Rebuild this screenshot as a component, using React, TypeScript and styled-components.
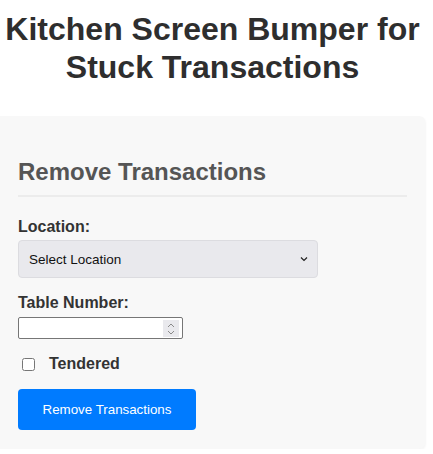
import React, { useState } from 'react'
import styled, { createGlobalStyle } from 'styled-components'

const GlobalStyle = createGlobalStyle`
  html, body {
    margin: 0;
    padding: 0;
    background: #fff;
  }
  body {
    font-family: 'Liberation Sans', Arial, sans-serif;
    color: #333;
  }
`

const Page = styled.div`
  width: 425px;
`

const Title = styled.h1`
  margin: 10px 0 0;
  font-size: 32px;
  line-height: 38px;
  font-weight: bold;
  text-align: center;
  color: #2e2e2e;
`

const Panel = styled.div`
  margin-top: 30px;
  background: #f8f8f8;
  border-radius: 0 6px 6px 0;
  padding: 42px 18px 19px;
  box-shadow: 1px 1px 2px rgba(0, 0, 0, 0.04);
`

const PanelTitle = styled.h2`
  margin: 0 0 20px;
  padding-bottom: 9px;
  font-size: 24px;
  line-height: 28px;
  color: #555;
  border-bottom: 2px solid #ececec;
`

const Field = styled.div<{ $gap: number }>`
  display: flex;
  flex-direction: column;
  align-items: flex-start;
  gap: ${p => p.$gap}px;
  margin-bottom: 15px;
`

const Label = styled.label`
  font-size: 16px;
  font-weight: bold;
  line-height: 20px;
`

const SelectWrap = styled.div`
  position: relative;
  width: 300px;
`

const Select = styled.select`
  appearance: none;
  width: 300px;
  height: 38px;
  padding: 0 10px;
  font-family: 'Liberation Sans', Arial, sans-serif;
  font-size: 13.5px;
  color: #111;
  background: #e9e9ed;
  border: 1px solid #dcdce0;
  border-radius: 4px;
`

const Chevron = styled.svg`
  position: absolute;
  right: 10px;
  top: 16px;
  width: 8px;
  height: 6px;
  pointer-events: none;
`

const InputWrap = styled.div`
  position: relative;
  width: 165px;
`

const NumberInput = styled.input`
  width: 165px;
  height: 22px;
  box-sizing: border-box;
  border: 1px solid #767676;
  border-radius: 2px;
  background: #fff;
  font-size: 14px;
  -moz-appearance: textfield;

  &::-webkit-inner-spin-button,
  &::-webkit-outer-spin-button {
    -webkit-appearance: none;
    margin: 0;
  }
`

const Spinner = styled.div`
  position: absolute;
  right: 4px;
  top: 3px;
  width: 16px;
  height: 17px;
  background: #e9e9ed;
  display: flex;
  flex-direction: column;
  align-items: center;
  justify-content: center;
  gap: 2px;
  pointer-events: none;
`

const CheckRow = styled.label`
  display: flex;
  align-items: center;
  gap: 14px;
  margin: 0 0 15px 4px;
  font-size: 16px;
  font-weight: bold;
  line-height: 20px;
`

const Box = styled.input`
  width: 13px;
  height: 13px;
  margin: 0;
`

const Button = styled.button`
  width: 178px;
  height: 41px;
  background: #007bff;
  color: #fff;
  border: none;
  border-radius: 4px;
  font-family: 'Liberation Sans', Arial, sans-serif;
  font-size: 13.33px;
  cursor: pointer;
`

export default function App() {
  const [location, setLocation] = useState('')
  const [table, setTable] = useState('')
  const [tendered, setTendered] = useState(false)

  return (
    <Page>
      <GlobalStyle />
      <Title>Kitchen Screen Bumper for Stuck Transactions</Title>
      <Panel>
        <PanelTitle>Remove Transactions</PanelTitle>
        <Field $gap={3}>
          <Label htmlFor='location'>Location:</Label>
          <SelectWrap>
            <Select id='location' value={location} onChange={e => setLocation(e.target.value)}>
              <option value=''>Select Location</option>
            </Select>
            <Chevron viewBox='0 0 8 6'>
              <path d='M1 1.5 L4 4.5 L7 1.5' fill='none' stroke='#222' strokeWidth='1.2' />
            </Chevron>
          </SelectWrap>
        </Field>
        <Field $gap={4}>
          <Label htmlFor='table'>Table Number:</Label>
          <InputWrap>
            <NumberInput id='table' type='number' value={table} onChange={e => setTable(e.target.value)} />
            <Spinner>
              <svg width='8' height='5' viewBox='0 0 8 5'>
                <path d='M1 4 L4 1 L7 4' fill='none' stroke='#8a8a8a' strokeWidth='1' />
              </svg>
              <svg width='8' height='5' viewBox='0 0 8 5'>
                <path d='M1 1 L4 4 L7 1' fill='none' stroke='#8a8a8a' strokeWidth='1' />
              </svg>
            </Spinner>
          </InputWrap>
        </Field>
        <CheckRow>
          <Box type='checkbox' checked={tendered} onChange={e => setTendered(e.target.checked)} />
          Tendered
        </CheckRow>
        <Button>Remove Transactions</Button>
      </Panel>
    </Page>
  )
}
